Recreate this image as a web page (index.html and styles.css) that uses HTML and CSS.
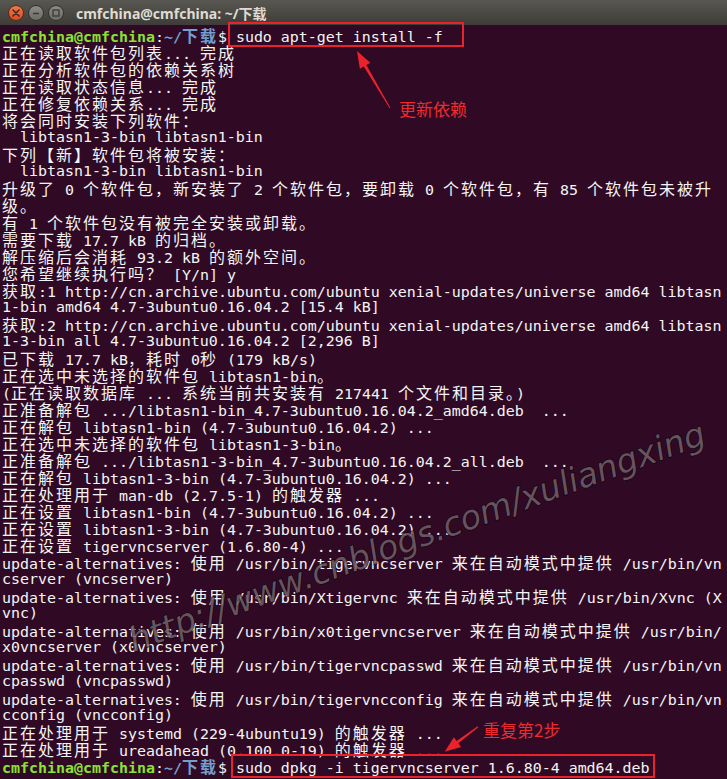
FILE: index.html
```html
<!DOCTYPE html>
<html lang="zh-CN">
<head>
    <meta charset="UTF-8">
    <meta name="viewport" content="width=device-width, initial-scale=1.0">
    <title>cmfchina@cmfchina: ~/下载</title>
    <link rel="stylesheet" href="styles.css">
</head>
<body>
    <div class="window">
        <div class="titlebar">
            <span class="btn close">
                <svg width="8" height="8" viewBox="0 0 8 8"><path d="M1 1L7 7M7 1L1 7" stroke="#3a2a22" stroke-width="1.6" stroke-linecap="round"/></svg>
            </span>
            <span class="btn">
                <svg width="8" height="8" viewBox="0 0 8 8"><path d="M1 4.5H7" stroke="#3a3935" stroke-width="1.5"/></svg>
            </span>
            <span class="btn">
                <svg width="8" height="8" viewBox="0 0 8 8"><rect x="1" y="1" width="6" height="6" fill="none" stroke="#3a3935" stroke-width="1.3"/></svg>
            </span>
            <span class="title">cmfchina@cmfchina: ~/下载</span>
        </div>

        <div class="term">
            <div class="ln"><span class="user">cmfchina@cmfchina</span>:<span class="path">~/<span class="cjk">下载</span></span>$ sudo apt-get install -f</div>
            <div class="ln"><span class="cjk">正在读取软件包列表</span>... <span class="cjk">完成</span></div>
            <div class="ln"><span class="cjk">正在分析软件包的依赖关系树</span></div>
            <div class="ln"><span class="cjk">正在读取状态信息</span>... <span class="cjk">完成</span></div>
            <div class="ln"><span class="cjk">正在修复依赖关系</span>... <span class="cjk">完成</span></div>
            <div class="ln"><span class="cjk">将会同时安装下列软件：</span></div>
            <div class="ln">  libtasn1-3-bin libtasn1-bin</div>
            <div class="ln"><span class="cjk">下列【新】软件包将被安装：</span></div>
            <div class="ln">  libtasn1-3-bin libtasn1-bin</div>
            <div class="ln"><span class="cjk">升级了</span> 0 <span class="cjk">个软件包，新安装了</span> 2 <span class="cjk">个软件包，要卸载</span> 0 <span class="cjk">个软件包，有</span> 85 <span class="cjk">个软件包未被升</span></div>
            <div class="ln"><span class="cjk">级。</span></div>
            <div class="ln"><span class="cjk">有</span> 1 <span class="cjk">个软件包没有被完全安装或卸载。</span></div>
            <div class="ln"><span class="cjk">需要下载</span> 17.7 kB <span class="cjk">的归档。</span></div>
            <div class="ln"><span class="cjk">解压缩后会消耗</span> 93.2 kB <span class="cjk">的额外空间。</span></div>
            <div class="ln"><span class="cjk">您希望继续执行吗？</span> [Y/n] y</div>
            <div class="ln"><span class="cjk">获取</span>:1 http://cn.archive.ubuntu.com/ubuntu xenial-updates/universe amd64 libtasn</div>
            <div class="ln">1-bin amd64 4.7-3ubuntu0.16.04.2 [15.4 kB]</div>
            <div class="ln"><span class="cjk">获取</span>:2 http://cn.archive.ubuntu.com/ubuntu xenial-updates/universe amd64 libtasn</div>
            <div class="ln">1-3-bin all 4.7-3ubuntu0.16.04.2 [2,296 B]</div>
            <div class="ln"><span class="cjk">已下载</span> 17.7 kB<span class="cjk">，耗时</span> 0<span class="cjk">秒</span> (179 kB/s)</div>
            <div class="ln"><span class="cjk">正在选中未选择的软件包</span> libtasn1-bin<span class="cjk">。</span></div>
            <div class="ln">(<span class="cjk">正在读取数据库</span> ... <span class="cjk">系统当前共安装有</span> 217441 <span class="cjk">个文件和目录。</span>)</div>
            <div class="ln"><span class="cjk">正准备解包</span> .../libtasn1-bin_4.7-3ubuntu0.16.04.2_amd64.deb  ...</div>
            <div class="ln"><span class="cjk">正在解包</span> libtasn1-bin (4.7-3ubuntu0.16.04.2) ...</div>
            <div class="ln"><span class="cjk">正在选中未选择的软件包</span> libtasn1-3-bin<span class="cjk">。</span></div>
            <div class="ln"><span class="cjk">正准备解包</span> .../libtasn1-3-bin_4.7-3ubuntu0.16.04.2_all.deb  ...</div>
            <div class="ln"><span class="cjk">正在解包</span> libtasn1-3-bin (4.7-3ubuntu0.16.04.2) ...</div>
            <div class="ln"><span class="cjk">正在处理用于</span> man-db (2.7.5-1) <span class="cjk">的触发器</span> ...</div>
            <div class="ln"><span class="cjk">正在设置</span> libtasn1-bin (4.7-3ubuntu0.16.04.2) ...</div>
            <div class="ln"><span class="cjk">正在设置</span> libtasn1-3-bin (4.7-3ubuntu0.16.04.2) ...</div>
            <div class="ln"><span class="cjk">正在设置</span> tigervncserver (1.6.80-4) ...</div>
            <div class="ln">update-alternatives: <span class="cjk">使用</span> /usr/bin/tigervncserver <span class="cjk">来在自动模式中提供</span> /usr/bin/vn</div>
            <div class="ln">cserver (vncserver)</div>
            <div class="ln">update-alternatives: <span class="cjk">使用</span> /usr/bin/Xtigervnc <span class="cjk">来在自动模式中提供</span> /usr/bin/Xvnc (X</div>
            <div class="ln">vnc)</div>
            <div class="ln">update-alternatives: <span class="cjk">使用</span> /usr/bin/x0tigervncserver <span class="cjk">来在自动模式中提供</span> /usr/bin/</div>
            <div class="ln">x0vncserver (x0vncserver)</div>
            <div class="ln">update-alternatives: <span class="cjk">使用</span> /usr/bin/tigervncpasswd <span class="cjk">来在自动模式中提供</span> /usr/bin/vn</div>
            <div class="ln">cpasswd (vncpasswd)</div>
            <div class="ln">update-alternatives: <span class="cjk">使用</span> /usr/bin/tigervncconfig <span class="cjk">来在自动模式中提供</span> /usr/bin/vn</div>
            <div class="ln">cconfig (vncconfig)</div>
            <div class="ln"><span class="cjk">正在处理用于</span> systemd (229-4ubuntu19) <span class="cjk">的触发器</span> ...</div>
            <div class="ln"><span class="cjk">正在处理用于</span> ureadahead (0.100.0-19) <span class="cjk">的触发器</span> ...</div>
            <div class="ln"><span class="user">cmfchina@cmfchina</span>:<span class="path">~/<span class="cjk">下载</span></span>$ sudo dpkg -i tigervncserver_1.6.80-4_amd64.deb</div>
        </div>

        <!-- annotations drawn over the screenshot -->
        <div class="mark box-top"></div>
        <div class="mark box-bottom"></div>
        <div class="note note-top">更新依赖</div>
        <div class="note note-bottom">重复第2步</div>
        <svg class="arrows" width="727" height="779" viewBox="0 0 727 779">
            <polygon points="357,51 370.3,62.8 366.4,65 390.4,107.7 389.6,108.3 363.8,66.6 359.9,68.8" fill="#e8232b"/>
            <polygon points="444.7,751.7 461.1,746.9 458.4,743.3 478.4,727.2 477.6,726.2 456.6,740.9 453.9,737.3" fill="#e8232b"/>
        </svg>
        <div class="watermark">http://www.cnblogs.com/xuliangxing</div>
    </div>
</body>
</html>
```

FILE: styles.css
```css
* {
    margin: 0;
    padding: 0;
    box-sizing: border-box;
}

body {
    background-color: #300a24;
}

.window {
    position: relative;
    width: 727px;
    height: 779px;
    overflow: hidden;
    background-color: #300a24;
}

.titlebar {
    height: 25px;
    display: flex;
    align-items: center;
    gap: 4px;
    padding-left: 8px;
    background: linear-gradient(#595751, #3d3c38);
}

.btn {
    width: 16px;
    height: 16px;
    border-radius: 50%;
    display: flex;
    align-items: center;
    justify-content: center;
    background: linear-gradient(#8d8b85, #6c6b66);
    border: 1px solid #34332f;
}

.btn.close {
    background: linear-gradient(#f07a4a, #dd4a20);
    border-color: #5a2a18;
}

.title {
    margin-left: 8px;
    font-family: "Noto Sans", "Noto Sans CJK SC", sans-serif;
    font-size: 14px;
    font-weight: 700;
    color: #dfdbd2;
}

.term {
    padding: 2px 0 0 2px;
    font-family: "DejaVu Sans Mono", "Noto Sans CJK SC", monospace;
    font-size: 14.95px;
    color: #f4f4f4;
}

.ln {
    height: 17px;
    line-height: 17px;
    white-space: pre;
}

.cjk {
    font-family: "Noto Sans CJK SC", sans-serif;
    font-size: 16px;
    letter-spacing: 2px;
}

.user {
    color: #8ae234;
    font-weight: 700;
}

.path {
    color: #729fcf;
    font-weight: 700;
}

.mark {
    position: absolute;
    border: 2px solid #e8232b;
}

.box-top {
    left: 228px;
    top: 22px;
    width: 236px;
    height: 25px;
}

.box-bottom {
    left: 231px;
    top: 754px;
    width: 424px;
    height: 24px;
}

.note {
    position: absolute;
    font-family: "Noto Sans CJK SC", sans-serif;
    font-size: 17px;
    line-height: 20px;
    color: #ee2a2f;
}

.note-top {
    left: 399px;
    top: 99px;
}

.note-bottom {
    left: 483px;
    top: 720px;
}

.arrows {
    position: absolute;
    left: 0;
    top: 0;
    pointer-events: none;
}

.watermark {
    position: absolute;
    left: 134px;
    top: 624px;
    font-family: "DejaVu Sans", sans-serif;
    font-style: italic;
    font-size: 33.5px;
    line-height: 34px;
    white-space: nowrap;
    color: rgba(120, 104, 114, 0.8);
    -webkit-text-stroke: 1.2px rgba(10, 0, 6, 0.8);
    paint-order: stroke fill;
    transform-origin: 0 28px;
    transform: rotate(-20deg);
}
```
